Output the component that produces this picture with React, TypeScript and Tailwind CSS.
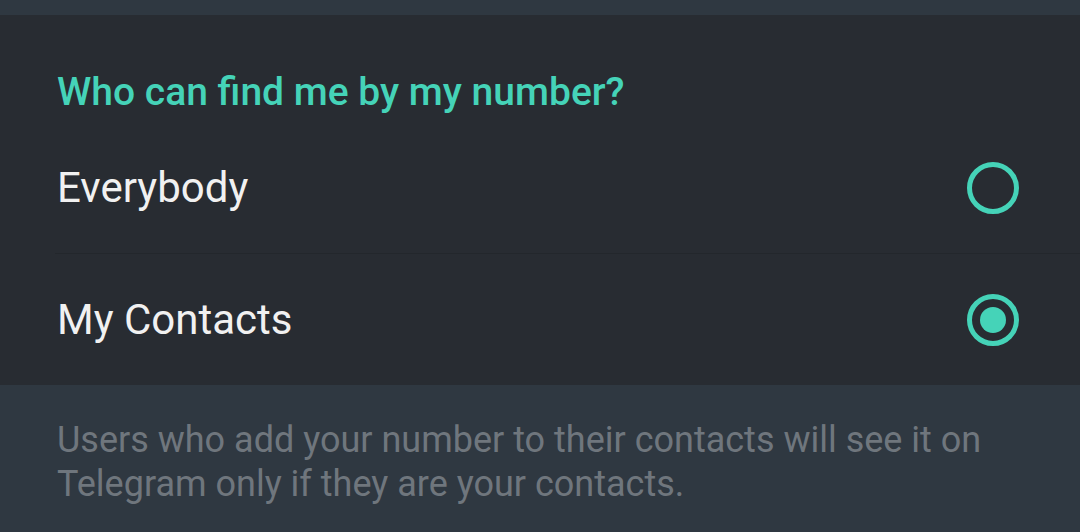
import React from "react";

function Radio({ checked }: { checked: boolean }) {
  return (
    <div className="w-[52px] h-[52px] rounded-full border-[5px] border-[#45d3b8] flex items-center justify-center">
      {checked && <div className="w-[26px] h-[26px] rounded-full bg-[#45d3b8]" />}
    </div>
  );
}

export default function App() {
  return (
    <div
      className="w-[1080px] h-[532px] bg-[#2f3841] flex flex-col overflow-hidden"
      style={{ fontFamily: "Roboto, 'Noto Sans', sans-serif" }}
    >
      <div className="h-[15px] shrink-0" />
      <div className="bg-[#282c32] flex flex-col shrink-0">
        <div className="h-[108px] pl-[57px] flex items-end pb-[9px]">
          <span className="text-[39px] font-medium text-[#45d3b8] leading-[44px]">
            Who can find me by my number?
          </span>
        </div>
        <div className="h-[130px] pl-[57px] pr-[61px] flex items-center justify-between">
          <span className="text-[42px] text-[#f1f1f1] leading-[48px]">Everybody</span>
          <Radio checked={false} />
        </div>
        <div className="ml-[55px] h-px bg-[#23272c]" />
        <div className="h-[131px] pl-[57px] pr-[61px] flex items-center justify-between">
          <span className="text-[42px] text-[#f1f1f1] leading-[48px]">My Contacts</span>
          <Radio checked={true} />
        </div>
      </div>
      <div className="pl-[57px] pt-[33px] pr-[30px]">
        <p className="text-[36px] leading-[44px] text-[#6f767d] whitespace-nowrap">
          Users who add your number to their contacts will see it on
          <br />
          Telegram only if they are your contacts.
        </p>
      </div>
    </div>
  );
}
